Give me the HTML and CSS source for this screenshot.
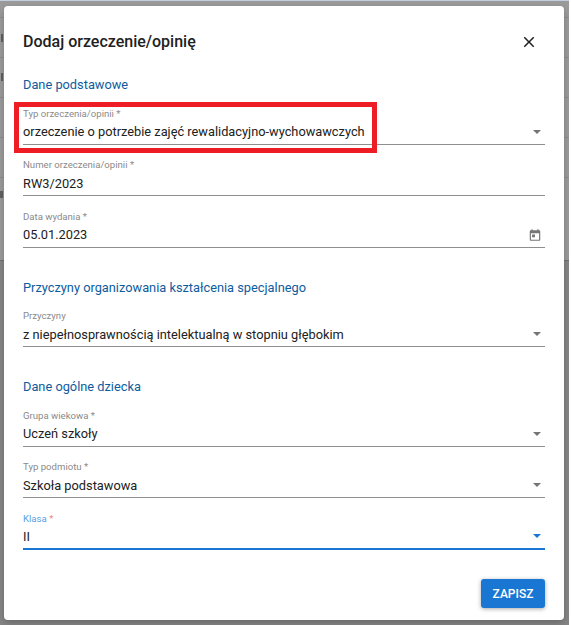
FILE: index.html
```html
<!DOCTYPE html>
<html lang="pl">

<head>
  <title>Dodaj orzeczenie/opinię</title>
  <meta charset="UTF-8">
  <link rel="stylesheet" href="styles.css">
</head>

<body>
  <div class="dialog">
    <header class="dialog-title">
      <h2>Dodaj orzeczenie/opinię</h2>
      <button class="close-button" aria-label="Zamknij">
        <svg viewBox="0 0 24 24" width="18" height="18">
          <path d="M19 6.41 17.59 5 12 10.59 6.41 5 5 6.41 10.59 12 5 17.59 6.41 19 12 13.41 17.59 19 19 17.59 13.41 12z" />
        </svg>
      </button>
    </header>

    <section class="section">
      <h3>Dane podstawowe</h3>
      <div class="field">
        <span class="field-label">Typ orzeczenia/opinii *</span>
        <div class="field-input">
          <span>orzeczenie o potrzebie zajęć rewalidacyjno-wychowawczych</span>
          <span class="arrow"></span>
        </div>
        <div class="marker"></div>
      </div>
      <div class="field">
        <span class="field-label">Numer orzeczenia/opinii *</span>
        <div class="field-input"><span>RW3/2023</span></div>
      </div>
      <div class="field">
        <span class="field-label">Data wydania *</span>
        <div class="field-input">
          <span>05.01.2023</span>
          <svg class="calendar" viewBox="0 0 24 24" width="14" height="14">
            <path d="M19 4h-1V2h-2v2H8V2H6v2H5c-1.1 0-2 .9-2 2v14c0 1.1.9 2 2 2h14c1.1 0 2-.9 2-2V6c0-1.1-.9-2-2-2zm0 16H5V9h14v11zM7 11h5v5H7z" />
          </svg>
        </div>
      </div>
    </section>

    <section class="section">
      <h3>Przyczyny organizowania kształcenia specjalnego</h3>
      <div class="field">
        <span class="field-label">Przyczyny</span>
        <div class="field-input">
          <span>z niepełnosprawnością intelektualną w stopniu głębokim</span>
          <span class="arrow"></span>
        </div>
      </div>
    </section>

    <section class="section">
      <h3>Dane ogólne dziecka</h3>
      <div class="field">
        <span class="field-label">Grupa wiekowa *</span>
        <div class="field-input">
          <span>Uczeń szkoły</span>
          <span class="arrow"></span>
        </div>
      </div>
      <div class="field">
        <span class="field-label">Typ podmiotu *</span>
        <div class="field-input">
          <span>Szkoła podstawowa</span>
          <span class="arrow"></span>
        </div>
      </div>
      <div class="field field-focused">
        <span class="field-label">Klasa <em>*</em></span>
        <div class="field-input">
          <span>II</span>
          <span class="arrow"></span>
        </div>
      </div>
    </section>

    <footer class="dialog-actions">
      <button class="save-button">ZAPISZ</button>
    </footer>
  </div>
</body>

</html>
```

FILE: styles.css
```css
* {
  box-sizing: border-box;
  margin: 0;
  padding: 0;
  font-family: Roboto, 'Liberation Sans', sans-serif;
}

html {
  background-color: #fff;
}

/* dimmed page behind the dialog: table rows show at the edges */
body {
  width: 569px;
  height: 625px;
  padding: 6px 5px 5px 4px;
  overflow: hidden;
  background:
    linear-gradient(#c3cfe0 0 1px, transparent 1px),
    linear-gradient(#5f5f5f, #5f5f5f) 1px 34px / 2px 8px no-repeat,
    linear-gradient(#5f5f5f, #5f5f5f) 1px 73px / 2px 8px no-repeat,
    linear-gradient(#5f5f5f, #5f5f5f) 0 191px / 3px 7px no-repeat,
    repeating-linear-gradient(transparent 0 39px, #8d8d8d 39px 40px) 0 -22px / 100% 238px no-repeat,
    linear-gradient(#9a9a9a 0 260px, #6f6f6f 260px 261px, #858585 261px);
}

.dialog {
  background-color: #fff;
  border-radius: 4px;
  height: 614px;
  padding: 0 19px;
  box-shadow: 0 3px 6px rgba(0, 0, 0, 0.2);
}

.dialog-title {
  display: flex;
  justify-content: space-between;
  align-items: center;
  height: 71px;
  padding-bottom: 1px;
}

h2 {
  font-size: 16px;
  font-weight: 500;
  color: #212121;
}

.close-button {
  display: flex;
  background: none;
  border: none;
  fill: #212121;
  margin: 2px 7px 0 0;
}

.section {
  margin-bottom: 32px;
}

h3 {
  font-size: 12.8px;
  font-weight: 400;
  color: #0d5c9e;
  line-height: 16px;
}

.field {
  position: relative;
  height: 51.5px;
  padding-top: 14.5px;
}

.field-label {
  display: block;
  font-size: 9.6px;
  line-height: 12px;
  color: #8a8a8a;
}

.field-input {
  display: flex;
  justify-content: space-between;
  align-items: center;
  height: 25px;
  font-size: 12.8px;
  color: #212121;
  border-bottom: 1px solid #8f8f8f;
}

.arrow {
  width: 0;
  height: 0;
  border-left: 4px solid transparent;
  border-right: 4px solid transparent;
  border-top: 4px solid #757575;
  margin-right: 4px;
}

.calendar {
  fill: #757575;
  margin-right: 3px;
}

.field-focused .field-label {
  color: #5a9fe0;
}

.field-focused em {
  font-style: normal;
  color: #f28b82;
}

.field-focused .field-input {
  border-bottom: 2px solid #1976d2;
}

.field-focused .arrow {
  border-top-color: #1976d2;
}

.marker {
  position: absolute;
  left: -9px;
  right: 168px;
  top: 8.5px;
  height: 51px;
  border: 5px solid #ee1c25;
}

.dialog-actions {
  display: flex;
  justify-content: flex-end;
  margin-top: -2.5px;
}

.save-button {
  width: 64px;
  height: 29px;
  background-color: #1976d2;
  color: #fff;
  border: none;
  border-radius: 3px;
  font-size: 12px;
  font-weight: 500;
  box-shadow: 0 1px 4px rgba(0, 0, 0, 0.35);
}
```
